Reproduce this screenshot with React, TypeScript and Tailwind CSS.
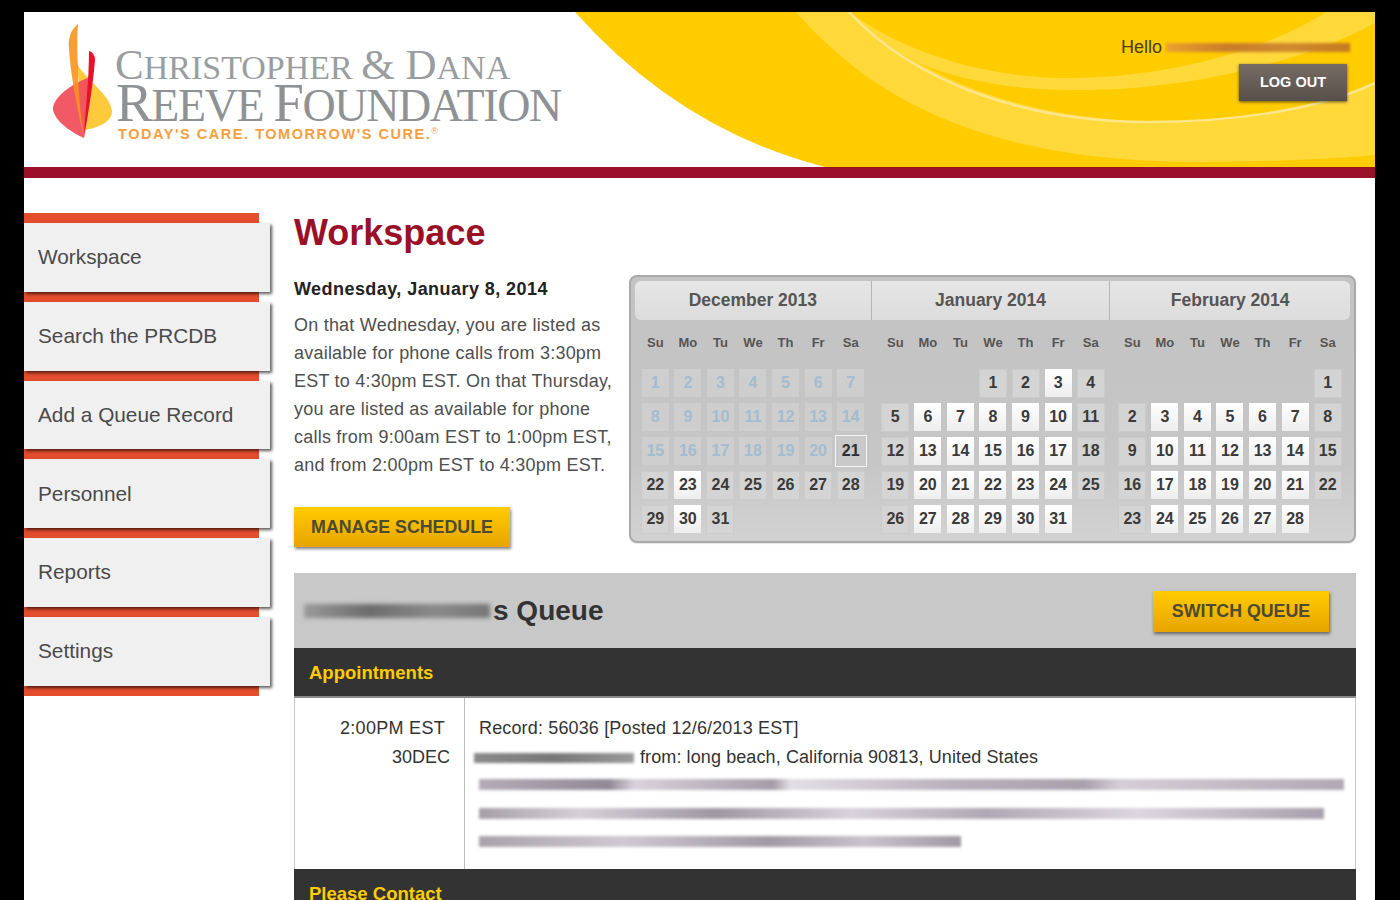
const navItems = ["Workspace", "Search the PRCDB", "Add a Queue Record", "Personnel", "Reports", "Settings"];
const weekDays = ["Su", "Mo", "Tu", "We", "Th", "Fr", "Sa"];

const months = [
  { name: "December 2013", start: 0, days: 31, past: 20, offset: "ml-[4px]", headerWidth: "w-[237px]", grays: [22, 24, 25, 26, 27, 28, 29, 31] },
  { name: "January 2014", start: 3, days: 31, past: 0, offset: "ml-[12px]", headerWidth: "w-[239px]", grays: [1, 2, 4, 5, 11, 12, 18, 19, 25, 26] },
  { name: "February 2014", start: 6, days: 28, past: 0, offset: "ml-[9px]", headerWidth: "w-[240px]", grays: [1, 2, 8, 9, 15, 16, 22, 23] },
];

function Logo() {
  return (
    <div className="flex pt-[10px] pl-[26px]">
      <svg width="66" height="120" viewBox="0 0 66 120" className="shrink-0">
        <path d="M27 42 C38 60 60 72 62 89 C62 100 48 106 34 108 Z" fill="#ffc93c" />
        <path d="M40 55 C26 60 6 72 3 85 C2 97 20 110 34 116 Z" fill="#f0505c" fillOpacity="0.95" />
        <path d="M28 2 C20 8 18 18 19 26 C20 50 28 90 34 116 C30 90 28 66 28 44 C27 30 27 14 28 2 Z" fill="#f7941e" fillOpacity="0.9" />
        <path d="M39 29 C43 30 45 34 45 38 C44 52 40 84 34 116 C35 90 39 60 39 29 Z" fill="#e8112d" />
      </svg>
      <div className="-ml-[1px] flex flex-col pt-[21px] [font-family:'Liberation_Serif',serif] whitespace-nowrap text-[#9a9da0]">
        <div className="h-[41px] text-[34px] leading-[43px]">
          <span className="text-[43px]">C</span>HRISTOPHER <span className="text-[43px]">&amp; D</span>ANA
        </div>
        <div className="h-[42px] pl-[1px] text-[46px] leading-[38px] tracking-[-1.4px] text-[#8f9295]">
          <span className="text-[55px]">R</span>EEVE <span className="text-[55px]">F</span>OUNDATION
        </div>
        <div className="pl-[3px] [font-family:'Liberation_Sans',sans-serif] text-[14.5px] leading-[16px] font-bold tracking-[1.55px] text-[#f5a040]">
          TODAY&apos;S CARE. TOMORROW&apos;S CURE.<span className="relative -top-[5px] text-[9px] font-normal">®</span>
        </div>
      </div>
    </div>
  );
}

function Header() {
  return (
    <header className="relative flex h-[155px] justify-between overflow-hidden bg-white">
      <svg viewBox="0 0 1351 155" className="absolute inset-0 h-full w-full">
        <path d="M551 0 Q656 118 801 155 L1351 155 L1351 0 Z" fill="#ffcc00" />
        <path d="M772 0 C860 100 980 150 1179 150 C1250 150 1320 146 1351 143 L1351 71 C1290 100 1200 110 1125 110 C1000 105 900 70 825 0 Z" fill="#ffd83a" />
        <path d="M825 0 C860 50 950 78 1045 78 C1180 80 1300 40 1351 11 L1351 0 L1302 0 C1240 40 1140 66 1045 66 C960 66 880 40 825 0 Z" fill="#ffd83a" />
        <path d="M825 0 C890 70 1000 110 1125 110 C1200 110 1290 100 1351 71" fill="none" stroke="#ffe68a" strokeWidth="2.5" />
      </svg>
      <div className="relative z-10">
        <Logo />
      </div>
      <div className="relative z-10 flex flex-col items-end pt-[24px] pr-[28px]">
        <div className="-mr-[3px] flex h-[22px] items-center gap-[4px] text-[18px] text-[#4a3c10]">
          <span>Hello</span>
          <div className="h-[9px] w-[184px] bg-[linear-gradient(90deg,#eaa030,#c97c28,#d08a30,#c47a20)] blur-[1.5px]" />
        </div>
        <button className="mt-[6px] h-[37px] w-[108px] bg-[linear-gradient(#766c64,#574f49)] text-[14.5px] font-bold text-white shadow-[0_1px_3px_rgba(0,0,0,0.6)]">LOG OUT</button>
      </div>
    </header>
  );
}

function Sidebar() {
  return (
    <nav className="flex w-[246px] shrink-0 flex-col">
      {navItems.map((item) => (
        <div key={item}>
          <div className="h-[10px] w-[235px] bg-[#e44d2e]" />
          <div className="relative z-10 flex h-[68.8px] items-center bg-[#f0f0f0] pb-[1px] pl-[14px] text-[20.8px] text-[#4a4a4a] shadow-[2px_2px_3px_rgba(0,0,0,0.65)]">{item}</div>
        </div>
      ))}
      <div className="h-[10px] w-[235px] bg-[#e44d2e]" />
    </nav>
  );
}

function Day({ day, kind }: { day: number; kind: string }) {
  if (kind === "past") {
    return <div className="flex h-[28px] w-[27px] items-center justify-center bg-[#cecece] text-[16px] font-bold text-[#a3bccf]">{day}</div>;
  }
  if (kind === "focus") {
    return <div className="flex h-[32px] w-[32px] items-center justify-center border border-[#f4f4f4] bg-[#c9c9c9] text-[16px] font-bold text-[#2e2e2e]">{day}</div>;
  }
  if (kind === "gray") {
    return <div className="flex h-[29px] w-[28px] items-center justify-center border border-[#cbcbcb] bg-[#d4d4d4] text-[16px] font-bold text-[#3a3a3a]">{day}</div>;
  }
  return <div className="flex h-[28px] w-[27px] items-center justify-center bg-[linear-gradient(#ffffff,#eeeeee)] text-[16px] font-bold text-[#3a3a3a]">{day}</div>;
}

function Month({ month }: { month: (typeof months)[number] }) {
  const days = Array.from({ length: month.days }, (_, i) => i + 1);
  return (
    <div className={`${month.offset} w-[228px]`}>
      <div className="mt-[15px] grid h-[16px] grid-cols-7">
        {weekDays.map((d) => (
          <div key={d} className="text-center text-[13px] leading-[16px] font-bold text-[#555555]">{d}</div>
        ))}
      </div>
      <div className="mt-[15px] grid auto-rows-[34px] grid-cols-7">
        {Array.from({ length: month.start }, (_, i) => (
          <div key={`blank-${i}`} />
        ))}
        {days.map((day) => {
          let kind = "white";
          if (day <= month.past) kind = "past";
          else if (month.name === "December 2013" && day === 21) kind = "focus";
          else if (month.grays.includes(day)) kind = "gray";
          return (
            <div key={day} className="flex items-center justify-center">
              <Day day={day} kind={kind} />
            </div>
          );
        })}
      </div>
    </div>
  );
}

function Calendar() {
  return (
    <div className="h-[268px] w-[727px] shrink-0 rounded-lg border-2 border-[#a9a9a9] bg-[linear-gradient(#c3c3c3,#c6c6c6_70%,#d2d2d2)] p-[4px] shadow-[0_1px_1px_rgba(0,0,0,0.1)]">
      <div className="flex h-[39px] overflow-hidden rounded-md bg-[linear-gradient(#e6e6e6,#dcdcdc)]">
        {months.map((m, i) => (
          <div key={m.name} className={`${m.headerWidth} flex items-center justify-center text-[17.5px] font-bold text-[#555555] ${i < 2 ? "border-r border-[#b5b5b5]" : ""}`}>
            {m.name}
          </div>
        ))}
      </div>
      <div className="flex">
        {months.map((m) => (
          <Month key={m.name} month={m} />
        ))}
      </div>
    </div>
  );
}

function DarkBar({ title }: { title: string }) {
  return (
    <div className="flex h-[50px] items-center border-b-2 border-[#8a8a8a] bg-[#333333] pt-[2px] pl-[15px] text-[18.5px] font-bold text-[#ffcc00]">{title}</div>
  );
}

function YellowButton({ label, width, height }: { label: string; width: string; height: string }) {
  return (
    <button className={`${width} ${height} block bg-[linear-gradient(#ffcc00,#e8a400)] text-[17.8px] font-bold text-[#4d4a32] shadow-[1px_2px_3px_rgba(0,0,0,0.5)]`}>{label}</button>
  );
}

export default function App() {
  return (
    <div className="h-[900px] overflow-hidden bg-black pt-[12px] pr-[25px] pl-[24px] [font-family:'Liberation_Sans',Arial,sans-serif]">
      <div className="h-[900px] bg-white">
        <Header />
        <div className="h-[11px] bg-[#9b1029]" />
        <div className="flex pt-[35px]">
          <Sidebar />
          <main className="ml-[24px] w-[1062px]">
            <h1 className="h-[40px] text-[36px] leading-[40px] font-bold text-[#9b1029]">Workspace</h1>
            <div className="mt-[22px] flex h-[268px] justify-between">
              <div className="w-[330px]">
                <h2 className="text-[18px] leading-[28px] font-bold tracking-[0.44px] text-[#222222]">Wednesday, January 8, 2014</h2>
                <p className="mt-[8px] w-[328px] text-[18px] leading-[28px] tracking-[0.22px] text-[#4f4f4f]">
                  On that Wednesday, you are listed as available for phone calls from 3:30pm EST to 4:30pm EST. On that Thursday, you are listed as available for phone calls from 9:00am EST to 1:00pm EST, and from 2:00pm EST to 4:30pm EST.
                </p>
                <div className="mt-[28px]">
                  <YellowButton label="MANAGE SCHEDULE" width="w-[216px]" height="h-[40px]" />
                </div>
              </div>
              <Calendar />
            </div>

            <section className="mt-[30px]">
              <div className="flex h-[75px] items-center justify-between bg-[#c8c8c8] pr-[27px] pl-[10px]">
                <div className="flex items-center">
                  <div className="h-[14px] w-[186px] bg-[linear-gradient(90deg,#9a9a9a,#6c6c6c_35%,#8a8a8a_70%,#777777)] blur-[2px]" />
                  <span className="ml-[3px] text-[28px] font-bold text-[#333333]">s Queue</span>
                </div>
                <div className="mt-[2px]">
                  <YellowButton label="SWITCH QUEUE" width="w-[176px]" height="h-[41px]" />
                </div>
              </div>
              <DarkBar title="Appointments" />
              <div className="flex h-[171px] border-x border-[#c8c8c8] text-[18px] leading-[29px] text-[#333333]">
                <div className="flex w-[170px] shrink-0 flex-col items-end border-r border-[#bdbdbd] pt-[16px] pr-[14px]">
                  <div className="pr-[5px] tracking-[0.3px]">2:00PM EST</div>
                  <div>30DEC</div>
                </div>
                <div className="flex-1 pt-[16px] pl-[14px]">
                  <div className="tracking-[0.15px]">Record: 56036 [Posted 12/6/2013 EST]</div>
                  <div className="flex items-center">
                    <div className="-ml-[5px] h-[10px] w-[160px] bg-[linear-gradient(90deg,#8a8a8a,#777777_50%,#999999)] blur-[1.5px]" />
                    <span className="ml-[6px] tracking-[0.1px]">from: long beach, California 90813, United States</span>
                  </div>
                  <div className="mt-[7px] flex flex-col gap-[17.5px]">
                    <div className="h-[11px] w-[865px] bg-[linear-gradient(90deg,#b5abb8_0%,#8f8a96_15%,#d8d2dc_18%,#a49ca8_34%,#e2dee6_36%,#b8b0bc_55%,#a8a0ac_70%,#d4ced8_74%,#b0a8b4_100%)] blur-[1.5px]" />
                    <div className="h-[11px] w-[845px] bg-[linear-gradient(90deg,#a59fa8_0%,#d6cfd8_12%,#9e98a2_28%,#d8d2dc_44%,#b0a8b4_60%,#dcd6e0_78%,#a8a0ac_100%)] blur-[1.5px]" />
                    <div className="h-[11px] w-[482px] bg-[linear-gradient(90deg,#a8a2aa_0%,#cfc8d2_30%,#a09aa4_60%,#c8c2cc_80%,#a09aa4_100%)] blur-[1.5px]" />
                  </div>
                </div>
              </div>
              <DarkBar title="Please Contact" />
            </section>
          </main>
        </div>
      </div>
    </div>
  );
}
